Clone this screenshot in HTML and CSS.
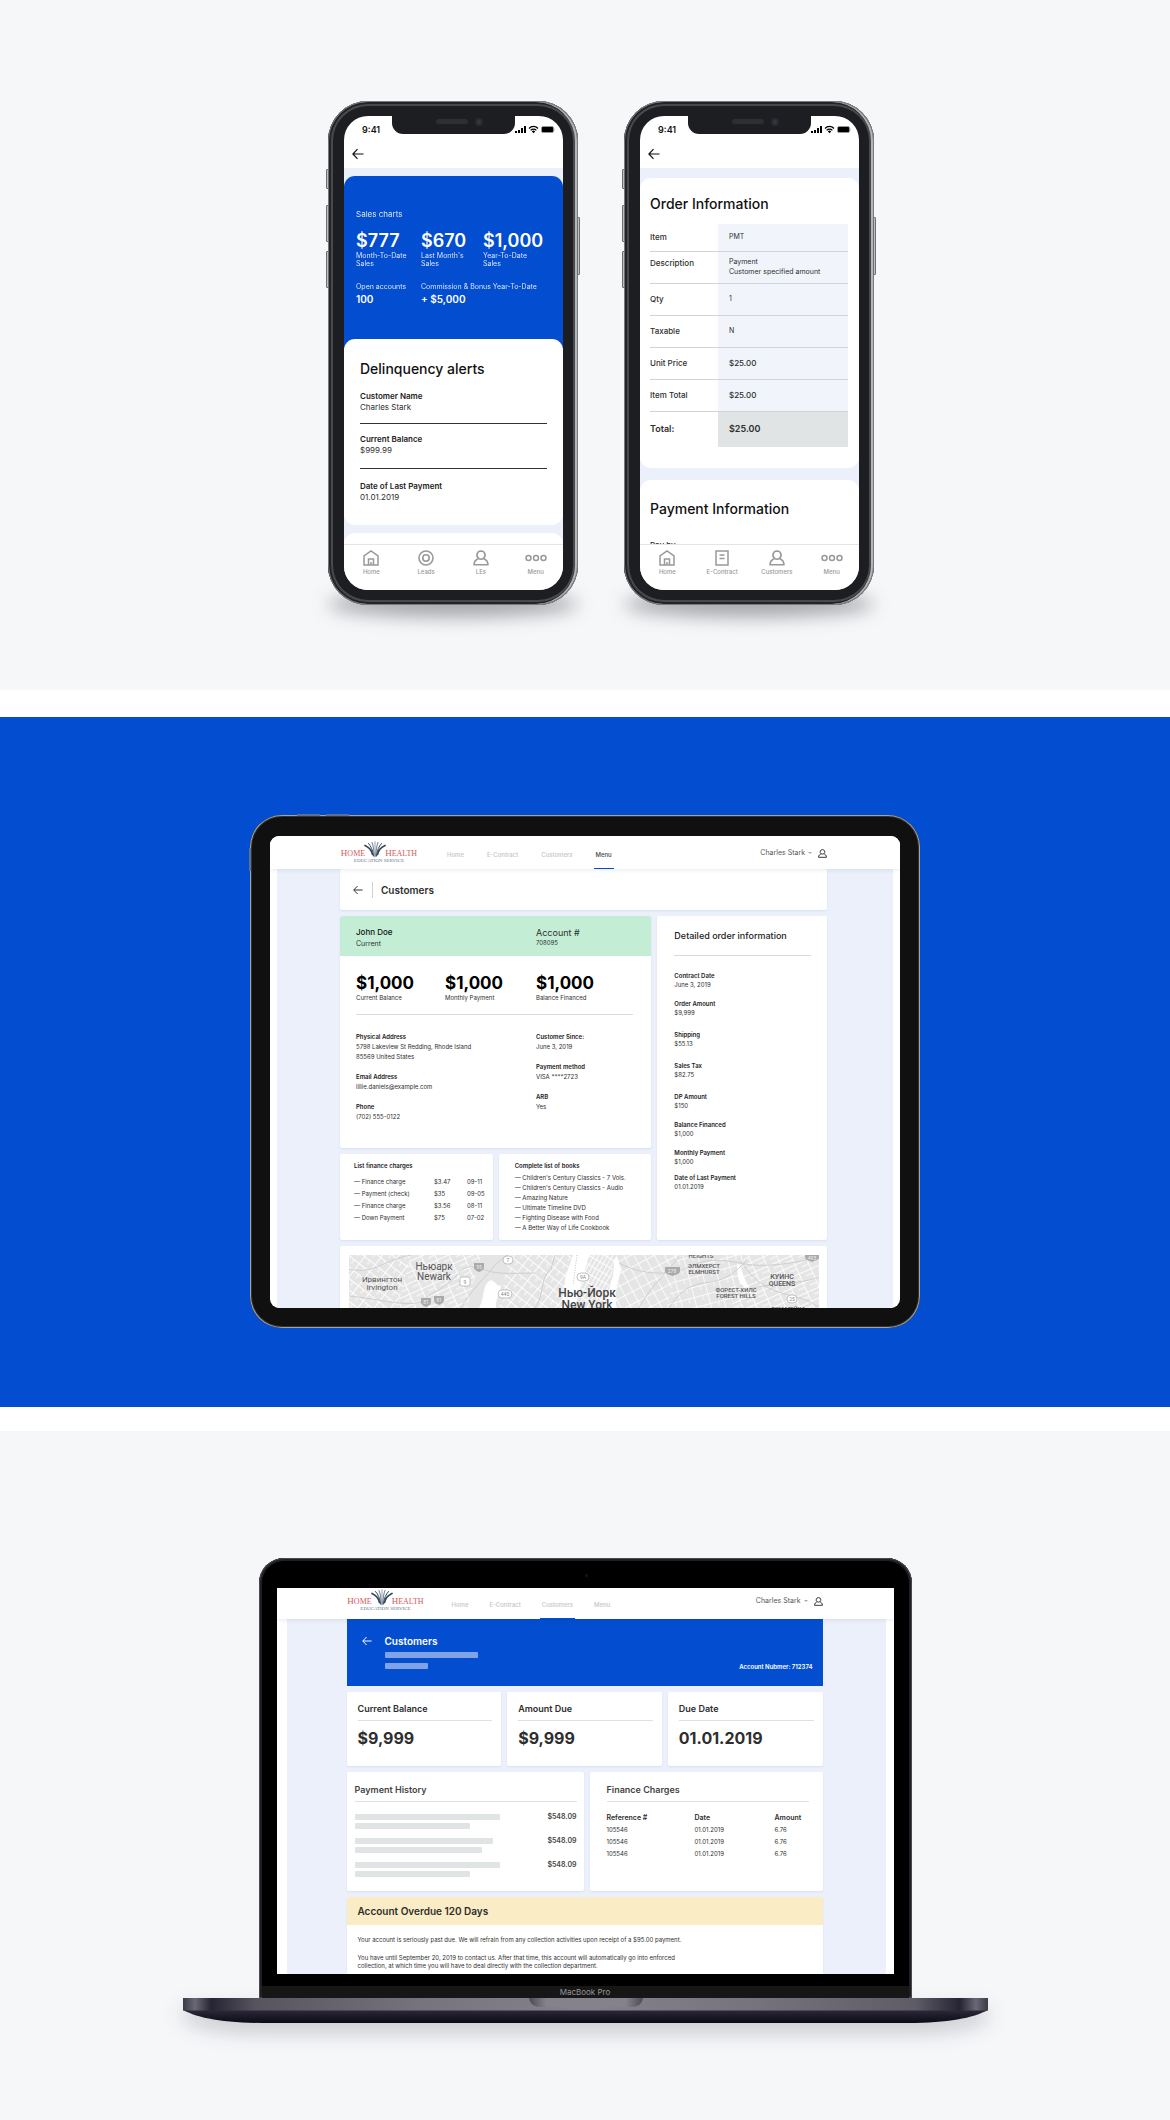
FILE: index.html
```html
<!DOCTYPE html>
<html lang="en">
<head>
<meta charset="utf-8">
<meta name="viewport" content="width=device-width, initial-scale=1">
<title>Home Health Education Service</title>
<link rel="stylesheet" href="styles.css">
</head>
<body>
<svg class="sprite" aria-hidden="true">
  <symbol id="i-back" viewBox="0 0 12 12"><path d="M11.5 6H1M5.500 1.200L.9 6l4.600 4.800" fill="none" stroke="currentColor" stroke-width="1.200"/></symbol>
  <symbol id="i-home" viewBox="0 0 16 16"><path d="M1 5.800L8 1l7 4.800V15H1zM5.500 15V9h5v6M8 15v-3" fill="none" stroke="currentColor" stroke-width="1.500"/></symbol>
  <symbol id="i-leads" viewBox="0 0 16 16"><g fill="none" stroke="currentColor" stroke-width="1.600"><circle cx="8" cy="8" r="7"/><circle cx="8" cy="8" r="3.200"/></g></symbol>
  <symbol id="i-user" viewBox="0 0 16 16"><path d="M8 1a4.100 4.100 0 0 0-2.400 7.400C3 9.400 1 11.400 1 14.800h14c0-3.400-2-5.400-4.600-6.400A4.100 4.100 0 0 0 8 1zM5.600 8.400c1.500 1 3.300 1 4.800 0" fill="none" stroke="currentColor" stroke-width="1.600" stroke-linejoin="round"/></symbol>
  <symbol id="i-contract" viewBox="0 0 16 16"><path d="M2 1h12v14H2zM5.500 5h5M5.500 8.500h5" fill="none" stroke="currentColor" stroke-width="1.500"/></symbol>
  <symbol id="i-menu" viewBox="0 0 22 16"><g fill="none" stroke="currentColor" stroke-width="1.500"><circle cx="3.500" cy="8" r="2.500"/><circle cx="11" cy="8" r="2.500"/><circle cx="18.500" cy="8" r="2.500"/></g></symbol>
  <symbol id="i-status" viewBox="0 0 40 9">
    <path d="M0 8V6h2v2zM3 8V5h2v3zM6 8V3h2v5zM9 8V1h2v7z"/>
    <path d="M14 3.500a6 6 0 0 1 9 0M15.600 5.400a4 4 0 0 1 5.800 0" fill="none" stroke="currentColor" stroke-width="1.200"/><path d="M16.800 6.400a2.300 2.300 0 0 1 3.400 0L18.500 8.200z"/>
    <rect x="26.500" y="1.500" width="12" height="6" rx="1.500" fill="#000" stroke="#999" stroke-width=".8"/><path d="M39.200 3.500v2" stroke="#999" stroke-width=".8"/>
  </symbol>
  <symbol id="emblem" viewBox="0 0 22 17">
    <g fill="none" stroke="#33465c" stroke-linecap="round">
      <path d="M8.500 13.500C7.500 9 4.500 6 1 4.500" stroke-width="1.700"/>
      <path d="M9.500 15C9 9 6.800 5 4.500 2.500" stroke-width="1"/>
      <path d="M10.200 15C10 9 9.300 4.500 8 1.500" stroke-width=".7"/>
      <path d="M11 16V.8" stroke="#7c8a9a" stroke-width=".8"/>
      <path d="M11.800 15C12 9 12.700 4.500 14 1.500" stroke-width=".7"/>
      <path d="M12.500 15C13 9 15.200 5 17.500 2.500" stroke-width="1"/>
      <path d="M13.500 13.500C14.500 9 17.500 6 21 4.500" stroke-width="1.700"/>
    </g>
  </symbol>
</svg>

<section class="stage stage-phones">
  <div class="phone">
    <i class="key key-mute"></i><i class="key key-up"></i><i class="key key-down"></i><i class="key key-power"></i>
    <div class="phone-screen">
      <div class="notch"><i class="speaker"></i><i class="lens"></i></div>
      <div class="status"><span>9:41</span><svg class="status-icons"><use href="#i-status"/></svg></div>
      <div class="topbar"><button class="icon-btn" aria-label="Back"><svg class="ic12"><use href="#i-back"/></svg></button></div>
      <main class="feed">
        <section class="sales">
          <p class="sales-title">Sales charts</p>
          <div class="sales-grid">
            <div><strong>$777</strong><span>Month-To-Date<br>Sales</span></div>
            <div><strong>$670</strong><span>Last Month's<br>Sales</span></div>
            <div><strong>$1,000</strong><span>Year-To-Date<br>Sales</span></div>
          </div>
          <div class="sales-more">
            <div><span>Open accounts</span><b>100</b></div>
            <div><span>Commission &amp; Bonus Year-To-Date</span><b>+ $5,000</b></div>
          </div>
        </section>
        <section class="m-card alerts">
          <h2>Delinquency alerts</h2>
          <dl>
            <div><dt>Customer Name</dt><dd>Charles Stark</dd></div>
            <div><dt>Current Balance</dt><dd>$999.99</dd></div>
            <div><dt>Date of Last Payment</dt><dd>01.01.2019</dd></div>
          </dl>
        </section>
        <div class="m-card peek"></div>
      </main>
      <nav class="tabs">
        <a href="#"><svg class="ic16"><use href="#i-home"/></svg>Home</a>
        <a href="#"><svg class="ic16"><use href="#i-leads"/></svg>Leads</a>
        <a href="#"><svg class="ic16"><use href="#i-user"/></svg>LEs</a>
        <a href="#"><svg class="ic22"><use href="#i-menu"/></svg>Menu</a>
      </nav>
    </div>
  </div>

  <div class="phone">
    <i class="key key-mute"></i><i class="key key-up"></i><i class="key key-down"></i><i class="key key-power"></i>
    <div class="phone-screen">
      <div class="notch"><i class="speaker"></i><i class="lens"></i></div>
      <div class="status"><span>9:41</span><svg class="status-icons"><use href="#i-status"/></svg></div>
      <div class="topbar"><button class="icon-btn" aria-label="Back"><svg class="ic12"><use href="#i-back"/></svg></button></div>
      <main class="feed feed-order">
        <section class="m-card order">
          <h2>Order Information</h2>
          <table>
            <tr class="short"><th scope="row">Item</th><td>PMT</td></tr>
            <tr class="top"><th scope="row">Description</th><td>Payment<br>Customer specified amount</td></tr>
            <tr><th scope="row">Qty</th><td>1</td></tr>
            <tr><th scope="row">Taxable</th><td>N</td></tr>
            <tr class="price"><th scope="row">Unit Price</th><td>$25.00</td></tr>
            <tr class="price"><th scope="row">Item Total</th><td>$25.00</td></tr>
            <tr class="total"><th scope="row">Total:</th><td>$25.00</td></tr>
          </table>
        </section>
        <section class="m-card payment">
          <h2>Payment Information</h2>
          <p>Pay by</p>
        </section>
      </main>
      <nav class="tabs">
        <a href="#"><svg class="ic16"><use href="#i-home"/></svg>Home</a>
        <a href="#"><svg class="ic16"><use href="#i-contract"/></svg>E-Contract</a>
        <a href="#"><svg class="ic16"><use href="#i-user"/></svg>Customers</a>
        <a href="#"><svg class="ic22"><use href="#i-menu"/></svg>Menu</a>
      </nav>
    </div>
  </div>
</section>

<section class="stage stage-tablet">
  <div class="tablet">
    <i class="tkey tkey-a"></i><i class="tkey tkey-b"></i><i class="tkey tkey-c"></i>
    <div class="tablet-screen">
      <header class="site-bar">
        <a href="#" class="logo"><span class="logo-row"><span><b>H</b>OME</span><svg class="emblem"><use href="#emblem"/></svg><span><b>H</b>EALTH</span></span><small>EDUCATION SERVICE</small></a>
        <nav class="site-nav">
          <a href="#">Home</a><a href="#">E-Contract</a><a href="#">Customers</a><a href="#" class="current dark">Menu</a>
        </nav>
        <button class="user">Charles Stark <i class="caret"></i><svg class="ic9"><use href="#i-user"/></svg></button>
      </header>
      <main class="canvas">
        <div class="page-head card">
          <button class="icon-btn" aria-label="Back"><svg class="ic10"><use href="#i-back"/></svg></button>
          <h1>Customers</h1>
        </div>
        <div class="customer-grid">
          <section class="card customer">
            <div class="customer-head">
              <div><strong>John Doe</strong><span>Current</span></div>
              <div><span class="acc">Account #</span><small>708095</small></div>
            </div>
            <div class="amounts">
              <div><strong>$1,000</strong><span>Current Balance</span></div>
              <div><strong>$1,000</strong><span>Monthly Payment</span></div>
              <div><strong>$1,000</strong><span>Balance Financed</span></div>
            </div>
            <div class="contacts">
              <dl>
                <dt>Physical Address</dt><dd>5798 Lakeview St Redding, Rhode Island<br>85569 United States</dd>
                <dt>Email Address</dt><dd>lillie.daniels@example.com</dd>
                <dt>Phone</dt><dd>(702) 555-0122</dd>
              </dl>
              <dl>
                <dt>Customer Since:</dt><dd>June 3, 2019</dd>
                <dt>Payment method</dt><dd>VISA ****2723</dd>
                <dt>ARB</dt><dd>Yes</dd>
              </dl>
            </div>
          </section>
          <section class="card charges">
            <h3>List finance charges</h3>
            <table>
              <tr><td>— Finance charge</td><td>$3.47</td><td>09-11</td></tr>
              <tr><td>— Payment (check)</td><td>$35</td><td>09-05</td></tr>
              <tr><td>— Finance charge</td><td>$3.56</td><td>08-11</td></tr>
              <tr><td>— Down Payment</td><td>$75</td><td>07-02</td></tr>
            </table>
          </section>
          <section class="card books">
            <h3>Complete list of books</h3>
            <ul>
              <li>Children's Century Classics - 7 Vols.</li>
              <li>Children's Century Classics - Audio</li>
              <li>Amazing Nature</li>
              <li>Ultimate Timeline DVD</li>
              <li>Fighting Disease with Food</li>
              <li>A Better Way of Life Cookbook</li>
            </ul>
          </section>
          <section class="card details">
            <h2>Detailed order information</h2>
            <dl>
              <div><dt>Contract Date</dt><dd>June 3, 2019</dd></div>
              <div class="roomy"><dt>Order Amount</dt><dd>$9,999</dd></div>
              <div class="roomy"><dt>Shipping</dt><dd>$55.13</dd></div>
              <div class="roomy"><dt>Sales Tax</dt><dd>$82.75</dd></div>
              <div><dt>DP Amount</dt><dd>$150</dd></div>
              <div><dt>Balance Financed</dt><dd>$1,000</dd></div>
              <div class="snug"><dt>Monthly Payment</dt><dd>$1,000</dd></div>
              <div><dt>Date of Last Payment</dt><dd>01.01.2019</dd></div>
            </dl>
          </section>
        </div>
        <div class="card map-card">
          <svg class="map" viewBox="0 0 470 53" preserveAspectRatio="xMidYMin slice" role="img" aria-label="Map of New York">
            <defs>
              <pattern id="g1" width="13" height="9" patternUnits="userSpaceOnUse" patternTransform="rotate(38)"><path d="M0 .5H13M.5 0V9M7 0V5" stroke="#fff" stroke-width=".9"/></pattern>
              <pattern id="g2" width="13" height="10" patternUnits="userSpaceOnUse" patternTransform="rotate(-24)"><path d="M0 .5H13M.5 0V10M6 5H13" stroke="#fff" stroke-width=".9"/></pattern>
              <pattern id="g3" width="4" height="8" patternUnits="userSpaceOnUse" patternTransform="rotate(30)"><path d="M0 .5H4M.5 0V8" stroke="#fff" stroke-width=".9"/></pattern>
              <pattern id="g4" width="11" height="9" patternUnits="userSpaceOnUse" patternTransform="rotate(62)"><path d="M0 .5H11M.5 0V9" stroke="#fff" stroke-width=".8"/></pattern>
              <pattern id="g5" width="14" height="10" patternUnits="userSpaceOnUse" patternTransform="rotate(-15)"><path d="M0 .5H14M.5 0V10M9 0V5" stroke="#fff" stroke-width=".8"/></pattern>
            </defs>
            <rect width="470" height="53" fill="#e5e5e5"/>
            <path d="M0 0H62L48 53H0z" fill="url(#g1)"/><path d="M62 0H132L118 53H48z" fill="url(#g2)"/>
            <path d="M160 0H226L214 53H150z" fill="url(#g1)"/><path d="M238 0H268L254 53H228z" fill="url(#g3)"/>
            <path d="M270 0H330L318 53H262z" fill="url(#g4)"/><path d="M330 0H396L382 53H318z" fill="url(#g5)"/><path d="M396 0H470V53H382z" fill="url(#g2)"/>
            <path d="M140 26C133 32 136 42 130 53H147C146 44 152 38 152 30C148 34 145 22 140 26zM224 0L216 24 213 53H226L232 30 240 0zM268 1C262 10 267 16 262 26L256 53H268C264 40 270 26 272 14zM388 8C396 14 391 22 400 31L397 33C387 27 389 18 388 8z" fill="#fff"/>
            <path d="M228 0L224 30" stroke="#999" stroke-width=".6" stroke-dasharray="1 1.500"/>
            <g fill="none" stroke="#cfcfcf" stroke-width="1">
              <path d="M0 41C30 44 62 53 72 46S100 30 108 20 124 10 136 15 170 18 186 18M0 14C24 20 32 6 62 0M112 53C120 38 138 20 146 10L158 0M186 53C196 40 190 24 202 14L206 0M270 8C300 24 330 18 345 10S380 6 396 9 440 10 470 2M320 53C328 40 338 30 356 28S384 20 398 5M392 6C402 22 414 34 440 40S462 50 470 51M290 53C300 34 310 26 330 2M400 34C420 28 450 30 470 22"/>
            </g>
            <g font-family="Roboto, sans-serif" font-size="5" text-anchor="middle" fill="#888">
              <g fill="#fff" stroke="#aaa" stroke-width=".7">
                <rect x="154" y="1" width="10" height="8" rx="4"/><rect x="111" y="22" width="10" height="9" rx="2"/><rect x="149" y="35" width="14" height="8" rx="4"/><rect x="228" y="18" width="12" height="8" rx="4"/><rect x="438" y="40" width="10" height="8" rx="4"/>
              </g>
              <g fill="#aaa">
                <path id="sh" d="M125 8H135V12C135 15 132 16 130 17C128 16 125 15 125 12z"/>
                <use href="#sh" x="-53" y="35"/><use href="#sh" x="-40" y="33"/><path d="M316 12H331V16C331 19 326 20 323.500 21C321 20 316 19 316 16zM456 0H470V3C470 5 465 6 463 7C461 6 456 5 456 2z"/>
              </g>
              <text x="159" y="7">7</text><text x="116" y="29">9</text><text x="156" y="41">440</text><text x="234" y="24">9A</text><text x="443" y="46">25</text>
              <g fill="#f0f0f0"><text x="130" y="14">95</text><text x="77" y="49">81</text><text x="90" y="47">81</text><text x="323" y="18">278</text><text x="463" y="5">495</text></g>
            </g>
            <g class="map-names" text-anchor="middle">
              <g font-size="8"><text x="33" y="27">Ирвингтон</text><text x="33" y="35">Irvington</text></g>
              <g font-size="10"><text x="85" y="15">Ньюарк</text><text x="85" y="25">Newark</text></g>
              <g font-size="12" class="map-city"><text x="238" y="42">Нью-Йорк</text><text x="238" y="54">New York</text></g>
              <g font-size="6" class="map-area"><text x="352" y="3">HEIGHTS</text><text x="355" y="13">ЭЛМХЕРСТ</text><text x="355" y="19">ELMHURST</text><text x="387" y="37">ФОРЕСТ-ХИЛС</text><text x="387" y="43">FOREST HILLS</text><text x="439" y="56">ДЖАМЕЙКА</text></g>
              <g font-size="7" class="map-area"><text x="433" y="24">КУИНС</text><text x="433" y="31">QUEENS</text></g>
            </g>
          </svg>
        </div>
      </main>
    </div>
  </div>
</section>

<section class="stage stage-laptop">
  <div class="lid">
    <i class="webcam"></i>
    <div class="laptop-screen">
      <header class="site-bar">
        <a href="#" class="logo"><span class="logo-row"><span><b>H</b>OME</span><svg class="emblem"><use href="#emblem"/></svg><span><b>H</b>EALTH</span></span><small>EDUCATION SERVICE</small></a>
        <nav class="site-nav">
          <a href="#">Home</a><a href="#">E-Contract</a><a href="#" class="current">Customers</a><a href="#">Menu</a>
        </nav>
        <button class="user">Charles Stark <i class="caret"></i><svg class="ic9"><use href="#i-user"/></svg></button>
      </header>
      <main class="canvas">
        <div class="hero">
          <button class="icon-btn" aria-label="Back"><svg class="ic10"><use href="#i-back"/></svg></button>
          <div class="hero-text">
            <h1>Customers</h1>
            <i class="bar" style="width:93px"></i>
            <i class="bar" style="width:43px"></i>
          </div>
          <p>Account Nubmer: 712374</p>
        </div>
        <div class="kpis">
          <section class="card"><h2>Current Balance</h2><strong>$9,999</strong></section>
          <section class="card"><h2>Amount Due</h2><strong>$9,999</strong></section>
          <section class="card"><h2>Due Date</h2><strong>01.01.2019</strong></section>
        </div>
        <div class="ledgers">
          <section class="card history">
            <h2>Payment History</h2>
            <ul>
              <li><span><i class="bar" style="width:145px"></i><i class="bar" style="width:115px"></i></span><b>$548.09</b></li>
              <li><span><i class="bar" style="width:138px"></i><i class="bar" style="width:127px"></i></span><b>$548.09</b></li>
              <li><span><i class="bar" style="width:145px"></i><i class="bar" style="width:115px"></i></span><b>$548.09</b></li>
            </ul>
          </section>
          <section class="card finance">
            <h2>Finance Charges</h2>
            <table>
              <tr><th>Reference #</th><th>Date</th><th>Amount</th></tr>
              <tr><td>105546</td><td>01.01.2019</td><td>6.76</td></tr>
              <tr><td>105546</td><td>01.01.2019</td><td>6.76</td></tr>
              <tr><td>105546</td><td>01.01.2019</td><td>6.76</td></tr>
            </table>
          </section>
        </div>
        <section class="card overdue">
          <h2>Account Overdue 120 Days</h2>
          <p>Your account is seriously past due. We will refrain from any collection activities upon receipt of a $95.00 payment.</p>
          <p>You have until September 20, 2019 to contact us. After that time, this account will automatically go into enforced<br>collection, at which time you will have to deal directly with the collection department.</p>
        </section>
      </main>
    </div>
    <div class="chin">MacBook Pro</div>
  </div>
  <svg class="base" viewBox="0 0 805 26" preserveAspectRatio="none" aria-hidden="true">
    <defs>
      <linearGradient id="deck"><stop offset="0" stop-color="#3c3a47"/><stop offset=".015" stop-color="#6b6875"/><stop offset=".035" stop-color="#262433"/><stop offset=".09" stop-color="#57545f"/><stop offset=".3" stop-color="#77747f"/><stop offset=".5" stop-color="#85828c"/><stop offset=".7" stop-color="#77747f"/><stop offset=".91" stop-color="#5f5c68"/><stop offset=".965" stop-color="#262433"/><stop offset=".985" stop-color="#6b6875"/><stop offset="1" stop-color="#3c3a47"/></linearGradient>
      <linearGradient id="under" x2="0" y2="1"><stop offset="0" stop-color="#2c2939"/><stop offset="1" stop-color="#0b0a14"/></linearGradient>
      <linearGradient id="scoop"><stop offset="0" stop-color="#4d4a57"/><stop offset=".15" stop-color="#85828c"/><stop offset=".85" stop-color="#85828c"/><stop offset="1" stop-color="#4d4a57"/></linearGradient>
    </defs>
    <path d="M0 12H805C790 20 765 25 725 25H80C40 25 15 20 0 12z" fill="url(#under)"/>
    <path d="M0 0H805V12.500H0z" fill="url(#deck)"/>
    <path d="M346 0H460C459 6 455 9 448 9H358C351 9 347 6 346 0z" fill="url(#scoop)"/>
  </svg>
</section>
</body>
</html>
```
FILE: styles.css
```css
* { box-sizing: border-box; margin: 0; padding: 0; }
body { font-family: Inter, "Liberation Sans", sans-serif; background: #fff; color: #2e2e2e; font-size: 6px; line-height: 10px; }
.sprite { position: absolute; width: 0; height: 0; }
svg { display: block; fill: currentColor; flex: none; }
a { color: inherit; text-decoration: none; }
button { font: inherit; color: inherit; background: none; border: 0; cursor: pointer; }
ul { list-style: none; }
table { border-collapse: collapse; width: 100%; table-layout: fixed; }
th { font-weight: 600; text-align: left; }
.ic9 { width: 9px; height: 9px; }
.ic10 { width: 10px; height: 10px; }
.ic12 { width: 12px; height: 12px; }
.ic16 { width: 16px; height: 16px; }
.ic22 { width: 22px; height: 16px; }
.icon-btn { display: flex; }

/* Stages */
.stage { background: #f6f7f9; }
.stage-phones { position: relative; z-index: 0; display: flex; flex-wrap: wrap; justify-content: center; gap: 46px; padding: 101px 0 85px 32px; }
.stage-tablet { background: #034dd0; margin: 27px 0 24px; padding: 98px 16px 79px; }
.stage-laptop { padding: 127px 16px 96px; }

/* Phone */
.phone { position: relative; display: flex; width: 250px; padding: 15px 15px 15px 16px; border-radius: 40px; background: #1d1e22;
  box-shadow: inset 0 0 0 1px #77797c, inset -2px 0 0 1px #b4b5b8, inset 0 0 0 3px #232427, inset 0 0 0 5px #48494c; }
.phone::before { content: ""; position: absolute; z-index: -1; left: 0; right: 0; bottom: -12px; height: 26px; border-radius: 50%; background: rgba(50,52,60,.42); filter: blur(9px); }
.key { position: absolute; width: 3px; background: #bfc0c2; border: 1px solid #6d6e70; border-radius: 1px; left: -2px; }
.key-mute { top: 68px; height: 20px; }
.key-up { top: 104px; height: 37px; }
.key-down { top: 150px; height: 37px; }
.key-power { left: auto; right: -2px; top: 116px; height: 58px; }
.phone-screen { position: relative; flex: 1; min-width: 0; display: flex; flex-direction: column; background: #fff; border-radius: 24px; overflow: hidden; }
.notch { position: absolute; top: -1px; left: 48px; right: 48px; height: 19px; background: #1d1e22; border-radius: 0 0 11px 11px; display: flex; justify-content: center; align-items: center; gap: 7px; padding: 0 0 6px 12px; }
.speaker { width: 32px; height: 5px; border-radius: 3px; background: #2e2f33; }
.lens { width: 8px; height: 8px; border-radius: 50%; background: #34363b; border: 2px solid #2a2b30; }
.status { display: flex; justify-content: space-between; align-items: center; height: 27px; padding: 0 8px 0 18px; font-size: 9px; font-weight: 600; color: #111; }
.status-icons { width: 40px; height: 9px; color: #000; }
.topbar { display: flex; align-items: center; height: 25px; padding: 0 8px 3px; color: #111; }
.feed { flex: 1; display: flex; flex-direction: column; background: #ebf0fa; padding-top: 8px; }
.feed-order { padding-top: 10px; gap: 12px; }
.m-card { background: #fff; border-radius: 11px; }
.m-card h2 { font-size: 14px; line-height: 18px; font-weight: 500; color: #111; }
.sales { background: #034dd0; color: #fff; border-radius: 11px 11px 0 0; padding: 33px 12px 45px; }
.sales-title { font-size: 8px; opacity: .85; margin-bottom: 12px; }
.sales-grid { display: grid; grid-template-columns: 65px 62px auto; margin-bottom: 14px; }
.sales-grid strong { display: block; font-size: 18px; line-height: 20px; font-weight: 600; margin-bottom: 1px; }
.sales-grid span { display: block; font-size: 7px; line-height: 8px; opacity: .85; }
.sales-more { display: grid; grid-template-columns: 65px auto; font-size: 7px; white-space: nowrap; }
.sales-more span, .sales-more b { display: block; }
.sales-more span { opacity: .85; }
.sales-more b { font-size: 10px; line-height: 14px; font-weight: 600; }
.alerts { margin-top: -12px; margin-bottom: 8px; padding: 21px 16px 22px; }
.alerts h2 { margin-bottom: 13px; }
.alerts dl { font-size: 8px; line-height: 11px; }
.alerts dl div { padding: 10px 0; border-bottom: 1px solid #333; }
.alerts dl div:first-child { padding-top: 0; }
.alerts dl div:nth-child(2) { padding-bottom: 12px; }
.alerts dl div:last-child { border: 0; padding: 12px 0 0; }
dt { font-weight: 600; color: #222; }
.peek { flex: 1; min-height: 8px; border-radius: 11px 11px 0 0; }
.tabs { display: grid; grid-template-columns: repeat(4, 1fr); border-top: 1px solid #e4e4e6; background: #fff; padding: 5px 0 14px; font-weight: 500; line-height: 8px; color: #999; }
.tabs a { display: flex; flex-direction: column; align-items: center; gap: 2px; }
.order { padding: 17px 11px 21px 10px; }
.order h2 { margin-bottom: 11px; }
.order tr { height: 32px; border-bottom: 1px solid #d0d3d8; }
.order .short { height: 27px; }
.order .total { height: 36px; border: 0; }
.order th { width: 68px; font-size: 8px; font-weight: 500; vertical-align: middle; }
.order td { background: #f1f5fb; padding-left: 11px; font-size: 7px; vertical-align: middle; }
.order .price td { font-size: 8px; font-weight: 500; }
.order .total th, .order .total td { font-size: 9px; font-weight: 600; }
.order .total td { background: #e0e4e5; }
.order .top th { vertical-align: top; padding-top: 6px; }
.payment { border-radius: 11px 11px 0 0; height: 64px; padding: 20px 10px 0; overflow: hidden; }
.payment p { margin-top: 22px; font-size: 8px; font-weight: 500; }

/* Desktop pages */
.site-bar { position: relative; display: flex; align-items: center; background: #fff; box-shadow: 0 1px 4px rgba(30,50,90,.1); }
.logo { width: 78px; display: flex; flex-direction: column; align-items: center; font-family: "Liberation Serif", serif; color: #d4585c; }
.logo-row { display: flex; align-items: flex-end; font-size: 8px; line-height: 9px; height: 16px; }
.logo-row b { font-size: 9px; font-weight: 400; }
.logo-row .emblem { width: 22px; height: 17px; margin: 0 -1px; }
.logo small { font-size: 5px; line-height: 6px; color: #66758a; }
.site-nav { display: flex; align-self: stretch; margin-left: 27px; color: #c4c4c8; font-weight: 500; }
.site-nav a { display: flex; align-items: center; padding: 3px 2px 0; }
.current { box-shadow: inset 0 -1px #034dd0; }
.dark { color: #444; }
.user { display: flex; align-items: center; margin-left: auto; font-size: 7px; color: #555; }
.user svg { color: #222; margin-left: 6px; }
.caret { margin-left: 3px; border: 2px solid transparent; border-top-color: #aaa; border-bottom: 0; }
.canvas { background: #ebf0fa; }
.card { background: #fff; border-radius: 2px; box-shadow: 0 1px 2px rgba(60,90,150,.1); }

/* Tablet */
.tablet { position: relative; max-width: 670px; margin: 0 auto; padding: 21px 20px 20px; border-radius: 32px; background: #101010; box-shadow: inset 0 0 0 1px #a3a39f, inset 0 0 0 2px #333; }
.tkey { position: absolute; background: #5d6f92; }
.tkey-a { top: -1px; left: 47px; width: 23px; height: 2px; }
.tkey-b { top: -1px; left: 76px; width: 23px; height: 2px; }
.tkey-c { left: -1px; top: 33px; width: 2px; height: 23px; }
.tablet-screen { background: #fff; border-radius: 9px; overflow: hidden; }
.tablet-screen .site-bar { height: 33px; padding: 1px 73px 0 70px; }
.tablet-screen .site-nav { gap: 19px; }
.tablet-screen .canvas { margin: 0 7px; padding: 0 66px 0 63px; }
.page-head { display: flex; align-items: center; height: 41px; padding-left: 13px; }
.page-head h1 { font-size: 10px; line-height: 16px; font-weight: 600; margin-left: 9px; padding-left: 8px; border-left: 1px solid #d0d0d4; }
.customer-grid { display: grid; grid-template-columns: 153fr 153fr 170fr; gap: 6px; margin: 6px 0; }
.customer { grid-column: 1 / 3; }
.charges { grid-row: 2; }
.books { grid-row: 2; }
.details { grid-column: 3; grid-row: 1 / 3; }
.customer-head { display: grid; grid-template-columns: 180px auto; padding: 11px 16px 7px; background: #c3eed5; border-radius: 2px 2px 0 0; font-size: 7px; }
.customer-head strong, .customer-head span, .customer-head small { display: block; line-height: 11px; }
.customer-head strong { font-size: 8px; font-weight: 500; color: #111; }
.customer-head .acc { font-size: 9px; }
.customer-head small { font-size: 6px; line-height: 10px; }
.amounts { display: grid; grid-template-columns: 89px 91px auto; margin: 0 18px 0 16px; padding: 17px 0 11px; border-bottom: 1px solid #dadbde; }
.amounts strong { display: block; font-size: 17px; line-height: 20px; font-weight: 700; color: #000; }
.contacts { display: grid; grid-template-columns: 180px auto; padding: 17px 16px 26px; }
dd + dt { margin-top: 10px; }
h3 { font-size: 6px; line-height: 10px; font-weight: 600; color: #222; }
.charges { padding: 7px 0 0 14px; }
.charges h3 { margin-bottom: 5px; }
.charges td { height: 12px; }
.charges td:nth-child(1) { width: 80px; }
.charges td:nth-child(2) { width: 33px; }
.books { padding: 7px 0 7px 16px; white-space: nowrap; }
.books h3 { margin-bottom: 2px; }
.books li::before { content: "— "; }
.details { padding: 14px 16px 0 17px; }
.details h2 { font-size: 9px; line-height: 12px; font-weight: 500; padding-bottom: 13px; border-bottom: 1px solid #dadbde; margin-bottom: 15px; color: #222; white-space: nowrap; }
.details dl { line-height: 9px; }
.details dl div { margin-bottom: 10px; }
.details .roomy { margin-bottom: 13px; }
.details .snug { margin-bottom: 7px; }
.map-card { padding: 9px 8px 0 9px; border-radius: 2px 2px 0 0; }
.map { width: 100%; height: 53px; }
.map-names { font-family: Roboto, "Noto Sans", sans-serif; fill: #555; }
.map-city { font-weight: 500; fill: #444; }
.map-area { font-weight: 500; }

/* Laptop */
.lid { position: relative; max-width: 653px; margin: 0 auto; padding: 30px 18px 0; border-radius: 25px 25px 0 0; background: #000; box-shadow: inset 0 0 0 1px #4a4a52, inset 0 0 0 3px #1f1f24; }
.webcam { position: absolute; left: 50%; top: 16px; width: 3px; height: 3px; border-radius: 50%; background: #16161a; }
.laptop-screen { background: #fff; overflow: hidden; }
.laptop-screen .site-bar { height: 31px; padding: 0 71px 5px 70px; }
.laptop-screen .site-nav { gap: 17px; margin-bottom: -5px; margin-left: 25px; }
.laptop-screen .canvas { margin: 0 8px 0 10px; padding: 0 63px 0 60px; }
.hero { display: flex; background: #034dd0; color: #fff; padding: 16px 10px 14px 15px; }
.hero .icon-btn { margin: 1px 13px 0 0; align-self: flex-start; }
.hero h1 { font-size: 10px; line-height: 12px; font-weight: 600; margin-bottom: 5px; }
.hero p { margin: 27px 0 0 auto; font-weight: 600; }
.hero .bar { background: #7fa3e4; }
.hero .bar + .bar { margin-top: 5px; }
.bar { display: block; max-width: 100%; height: 6px; border-radius: 1px; background: #e0e4e5; }
.bar + .bar { margin-top: 3px; }
.kpis { display: grid; grid-template-columns: repeat(3, 1fr); gap: 6px; margin: 6px 0; }
.kpis .card { padding: 10px 9px 17px 11px; }
.canvas .kpis h2, .ledgers h2 { font-size: 9px; line-height: 13px; font-weight: 600; padding-bottom: 5px; border-bottom: 1px solid #dfe0e3; }
.kpis strong { display: block; margin-top: 7px; font-size: 16px; line-height: 21px; font-weight: 700; }
.ledgers { display: grid; grid-template-columns: 237fr 233fr; gap: 6px; margin-bottom: 6px; }
.ledgers h2 { color: #444; }
.history { padding: 11px 7px 14px 8px; }
.history ul { display: flex; flex-direction: column; gap: 9px; padding-top: 12px; }
.history li { display: flex; justify-content: space-between; }
.history b { font-size: 7px; line-height: 6px; font-weight: 600; color: #444; }
.finance { padding: 11px 14px 14px 17px; }
.finance table { margin-top: 9px; }
.finance th { font-size: 7px; height: 13px; }
.finance td { height: 12px; }
.finance tr > :nth-child(1) { width: 88px; }
.finance tr > :nth-child(2) { width: 80px; }
.overdue { border-radius: 2px 2px 0 0; padding-bottom: 4px; }
.overdue h2 { font-size: 10px; line-height: 28px; font-weight: 600; padding: 0 11px; margin-bottom: 11px; background: #faecc4; border-radius: 2px 2px 0 0; }
.overdue p { padding: 0 11px; line-height: 8px; }
.overdue p + p { margin-top: 10px; }
.chin { margin: 12px -15px 0; background: #171717; color: #999; font-size: 8px; line-height: 12px; text-align: center; }
.base { width: 100%; max-width: 805px; height: 26px; margin: 0 auto; filter: drop-shadow(0 10px 10px rgba(30,30,45,.2)); }
```
